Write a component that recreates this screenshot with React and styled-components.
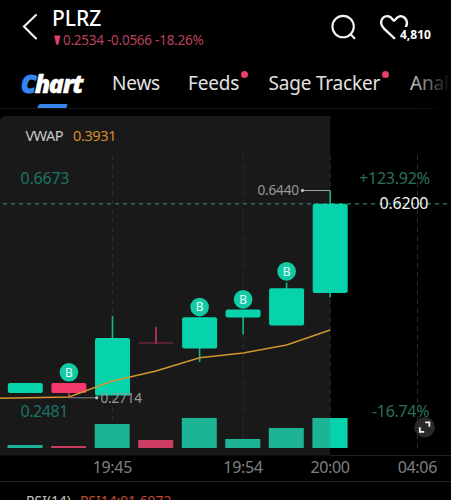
import React, { useState } from 'react';
import styled, { createGlobalStyle } from 'styled-components';

const UP = '#06d3ab';
const DOWN = '#f5386b';

const tabs = [
  { name: 'News', left: 112, width: 48 },
  { name: 'Feeds', left: 188, width: 52, dot: true },
  { name: 'Sage Tracker', left: 268.5, width: 112, dot: true },
  { name: 'Analysis', left: 410, width: 72 },
];

const candles = [
  { x: 25.3, top: 383, bottom: 393, high: 383, low: 393, volume: 3, up: true },
  { x: 68.9, top: 383, bottom: 393, high: 383, low: 397, volume: 2, up: false, badge: 372.3 },
  { x: 112.5, top: 338, bottom: 395.6, high: 316, low: 395, volume: 24, up: true },
  { x: 156, top: 342.5, bottom: 343.5, high: 327, low: 344, volume: 8, up: false },
  { x: 199.6, top: 317.3, bottom: 348.4, high: 317, low: 362, volume: 30, up: true, badge: 307 },
  { x: 243.1, top: 309.4, bottom: 317.6, high: 310, low: 334.5, volume: 9, up: true, badge: 299.4 },
  { x: 286.6, top: 288.3, bottom: 325.5, high: 282.5, low: 325, volume: 20, up: true, badge: 271.4 },
  { x: 330.2, top: 203.8, bottom: 293, high: 190.5, low: 297.5, volume: 30, up: true },
];

const times = [
  { label: '19:45', x: 112.5 },
  { label: '19:54', x: 243.1 },
  { label: '20:00', x: 330.2 },
  { label: '04:06', x: 417.5 },
];

const App = () => {
  const [active, setActive] = useState('Chart');

  return (
    <Screen>
      <GlobalStyle />
      <Header>
        <BackIcon viewBox="0 0 18 30">
          <path d="M15 3 L3 14.5 L15 26.5" />
        </BackIcon>
        <Quote>
          <Ticker>PLRZ</Ticker>
          <Change>
            <svg width="7" height="11" viewBox="0 0 7 11">
              <path d="M0.2 0.4 H6.4 L4.4 9.8 H2.2 Z" fill="#e53b66" />
            </svg>
            <span>0.2534 -0.0566 -18.26%</span>
          </Change>
        </Quote>
        <SearchIcon viewBox="0 0 28 28">
          <circle cx="13.1" cy="12.6" r="10.7" />
          <path d="M20.4 20.1 L24.4 24.2" />
        </SearchIcon>
        <Favourite>
          <HeartIcon viewBox="0 0 30 27">
            <path d="M15.2 24.1 L5 14.7 C1.1 11.1 1.4 6.2 4.2 3.7 C7.3 1 11.4 1.7 14.2 6.2 Q15 7.4 15.8 6.2 C18.6 2 22.4 1.1 25.3 3.5 C28.2 5.8 28.6 9 27.1 12.5" />
          </HeartIcon>
          <Count>4,810</Count>
        </Favourite>
      </Header>

      <Tabs>
        <ChartTab onClick={() => setActive('Chart')}>
          <span>C</span>hart
          {active === 'Chart' && <Underline />}
        </ChartTab>
        {tabs.map((tab, index) => {
          const prev = index === 0 ? 84 : tabs[index - 1].left + tabs[index - 1].width;
          return (
            <Tab key={tab.name} $gap={tab.left - prev} $width={tab.width} onClick={() => setActive(tab.name)}>
              {tab.name}
              {tab.dot && <Dot />}
            </Tab>
          );
        })}
        <Fade />
      </Tabs>

      <ChartArea>
        <Plot viewBox="0 109 451 347">
          <path d="M0 455.5 V122 Q0 116 6 116 H330.2 V455.5 Z" fill="#191919" />
          <path d="M330 455.5 H451" stroke="#202020" />

          {times.map((time) => (
            <path key={time.label} d={`M${time.x} 155 V452`} stroke="#2b2b2b" strokeDasharray="5 4" />
          ))}
          <path d="M3 203.8 H451" stroke="#226e5b" strokeWidth="1.4" strokeDasharray="4 4" />

          {candles.map((c) => (
            <rect
              key={c.x}
              x={c.x - 17.8}
              y={448 - c.volume}
              width="35"
              height={c.volume}
              fill={c.up ? '#1db395' : '#cb3c63'}
            />
          ))}
          <rect x="330.2" y="418" width="17.2" height="30" fill={UP} />

          <Label x="20.5" y="184" textLength="49" $size={16} $color="#197466">0.6673</Label>
          <Label x="20.5" y="417" textLength="48" $size={16} $color="#197466">0.2481</Label>
          <Label x="359" y="184" textLength="71" $size={16} $color="#27705f">+123.92%</Label>
          <Label x="372" y="417" textLength="57.5" $size={16} $color="#27705f">-16.74%</Label>

          {candles.map((c) => (
            <g key={c.x} fill={c.up ? UP : DOWN} stroke={c.up ? '#13b58e' : '#c93561'}>
              <path d={`M${c.x} ${c.high} V${c.low}`} strokeWidth="1.6" />
              <rect
                x={c.x - 17.5}
                y={c.top}
                width="35"
                height={c.bottom - c.top}
                rx={c.bottom - c.top > 2 ? 2 : 0}
                fill={c.bottom - c.top > 2 ? undefined : '#8d2b49'}
                stroke="none"
              />
            </g>
          ))}

          <path
            d="M0 398.3 L68.9 397 L112.5 381 L156 371 L199.6 357.8 L243.1 353 L286.6 345 L330.2 330"
            fill="none"
            stroke="#d3962e"
            strokeWidth="1.4"
          />

          {candles.filter((c) => c.badge).map((c) => (
            <g key={c.x}>
              <circle cx={c.x} cy={c.badge} r="9.3" fill="#12cba5" />
              <Label x={c.x} y={c.badge + 4.2} textAnchor="middle" $size={12} $color="#e9fffa">B</Label>
            </g>
          ))}

          <path d="M302 190.5 H330" stroke="#a0a0a5" />
          <circle cx="302.5" cy="190.5" r="1.7" fill="#b4b4b8" />
          <Label x="257.5" y="195.3" textLength="41.5" $size={13.6} $color="#96969b">0.6440</Label>

          <path d="M69 397.8 H96" stroke="#808085" />
          <circle cx="96.7" cy="397.8" r="1.7" fill="#b4b4b8" />
          <Label x="100.5" y="402.8" textLength="41.5" $size={13.6} $color="#96969b">0.2714</Label>

          <Label x="25.5" y="141" textLength="38" $size={14.6} $color="#c9c9c9">VWAP</Label>
          <Label x="73" y="141" textLength="43.5" $size={14.6} $color="#d48d2c">0.3931</Label>
          <Label x="379.5" y="209" textLength="49" $size={16} $color="#f4f4f4">0.6200</Label>

          <circle cx="424.6" cy="427.3" r="10.3" fill="#29292c" />
          <path
            d="M425.2 422.4 H429.4 V426.8 M419.8 427.2 V431.8 H424.2"
            fill="none"
            stroke="#f2f2f2"
            strokeWidth="1.8"
          />
        </Plot>
        <Axis viewBox="0 456 451 25">
          {times.map((time) => (
            <Label
              key={time.label}
              x={time.x - 19.8}
              y="472.6"
              textLength="39.6"
              $size={16}
              $color="#808080"
            >
              {time.label}
            </Label>
          ))}
        </Axis>
      </ChartArea>

      <Indicator>
        <span>RSI(14)</span>
        <RsiValue>RSI14:91.6972</RsiValue>
      </Indicator>
    </Screen>
  );
};

export default App;

const GlobalStyle = createGlobalStyle`
  * {
    box-sizing: border-box;
  }

  body {
    margin: 0;
    background: #000;
    overflow: hidden;
  }
`;

const Screen = styled.div`
  width: 451px;
  height: 500px;
  display: flex;
  flex-direction: column;
  overflow: hidden;
  background: #000;
  color: #fff;
  font-family: 'Noto Sans', 'Open Sans', sans-serif;
`;

const Header = styled.header`
  height: 60px;
  flex-shrink: 0;
  display: flex;
  align-items: flex-start;
`;

const Icon = styled.svg`
  flex-shrink: 0;
  fill: none;
  stroke: #f5f5f5;
  stroke-linecap: round;
`;

const BackIcon = styled(Icon)`
  width: 18px;
  height: 30px;
  margin: 12px 0 0 21px;
  stroke-width: 2.1;
`;

const Quote = styled.div`
  width: 278px;
  padding: 5px 0 0 13px;
`;

const Ticker = styled.div`
  font-size: 21px;
  font-weight: 500;
  line-height: 26px;
`;

const Change = styled.div`
  display: flex;
  align-items: center;
  gap: 2px;
  margin-left: 2px;
  color: #b9405c;
  font-size: 13.5px;
  letter-spacing: -0.25px;
  line-height: 18px;
  white-space: nowrap;
`;

const SearchIcon = styled(Icon)`
  width: 28px;
  height: 28px;
  margin: 14px 0 0 13px;
  stroke-width: 2.1;
`;

const Favourite = styled.div`
  position: relative;
  margin: 14px 0 0 21px;
`;

const HeartIcon = styled(Icon)`
  display: block;
  width: 30px;
  height: 27px;
  stroke-width: 2.4;
`;

const Count = styled.span`
  position: absolute;
  left: 20px;
  top: 13px;
  padding-left: 1px;
  background: #000;
  font-size: 12px;
  font-weight: 700;
  line-height: 16px;
`;

const Tabs = styled.nav`
  position: relative;
  height: 49px;
  flex-shrink: 0;
  display: flex;
  padding-left: 21px;
  border-bottom: 1px solid #181818;
`;

const ChartTab = styled.div`
  position: relative;
  width: 63px;
  flex-shrink: 0;
  font-family: 'Open Sans', 'Noto Sans', sans-serif;
  font-size: 25px;
  font-style: italic;
  font-weight: 800;
  line-height: 46px;
  letter-spacing: -1.4px;
  -webkit-text-stroke: 0.3px currentColor;
  cursor: pointer;

  span {
    color: #3486ed;
    font-size: 24px;
    -webkit-text-stroke: 1px currentColor;
  }
`;

const Underline = styled.div`
  position: absolute;
  left: 17px;
  bottom: 0;
  width: 29px;
  height: 4px;
  border-radius: 2px 1px 0 0;
  background: #3486ed;
  transform: skewX(-18deg);
`;

const Tab = styled.div`
  position: relative;
  width: ${props => props.$width}px;
  margin-left: ${props => props.$gap}px;
  flex-shrink: 0;
  color: #e2e2e2;
  font-size: 19px;
  letter-spacing: -0.2px;
  line-height: 46px;
  white-space: nowrap;
  cursor: pointer;
`;

const Dot = styled.i`
  position: absolute;
  right: -8px;
  top: 11px;
  width: 7px;
  height: 7px;
  border-radius: 50%;
  background: #e83e68;
`;

const Fade = styled.div`
  position: absolute;
  right: 0;
  top: 0;
  width: 46px;
  height: 49px;
  background: linear-gradient(to right, transparent, #000);
`;

const ChartArea = styled.section`
  height: 373px;
  flex-shrink: 0;
  border-bottom: 1px solid #202020;
`;

const Plot = styled.svg`
  display: block;
  width: 451px;
  height: 347px;
`;

const Axis = styled.svg`
  display: block;
  width: 451px;
  height: 25px;
`;

const Label = styled.text`
  fill: ${props => props.$color};
  font-size: ${props => props.$size}px;
`;

const Indicator = styled.div`
  display: flex;
  gap: 9px;
  padding: 10px 0 0 26px;
  color: #c4c4c4;
  font-size: 13.8px;
  line-height: 18px;
`;

const RsiValue = styled.span`
  color: #c44a34;
`;
